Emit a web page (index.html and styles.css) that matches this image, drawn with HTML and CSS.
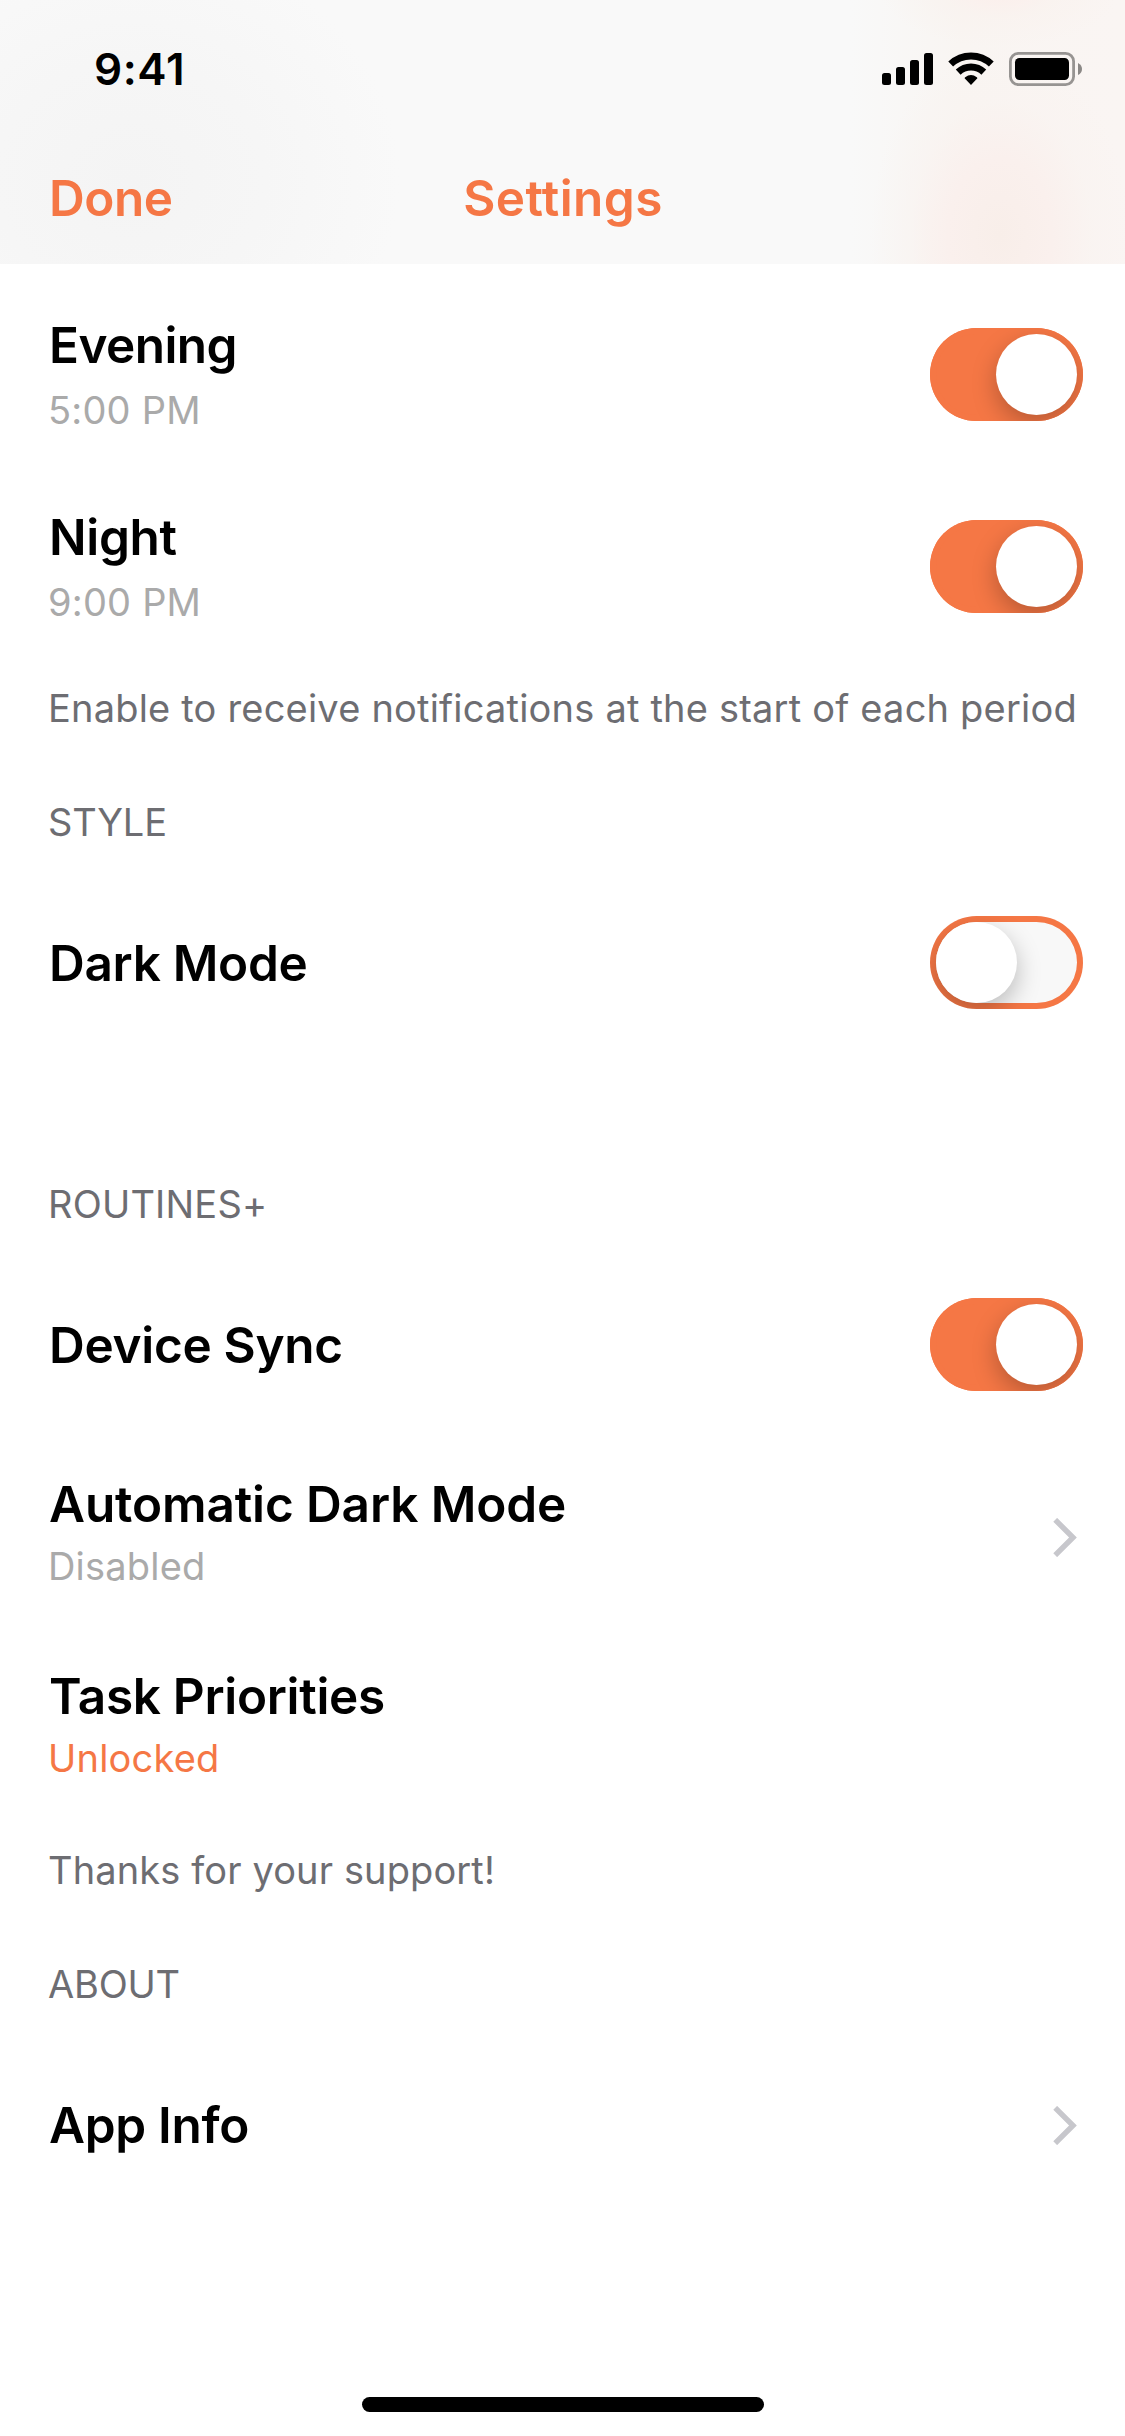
FILE: index.html
```html
<!DOCTYPE html>
<html lang="en">
<head>
<meta charset="utf-8">
<title>Settings</title>
<link rel="stylesheet" href="styles.css">
</head>
<body>
<div class="screen">
  <header class="header">
    <div class="status-bar">
      <span class="time">9:41</span>
      <svg class="status-icons" width="201" height="36" viewBox="0 0 201 36">
        <rect x="0" y="22" width="9" height="12" rx="2.5"/>
        <rect x="14" y="16" width="9" height="18" rx="2.5"/>
        <rect x="28" y="9" width="9" height="25" rx="2.5"/>
        <rect x="42" y="2" width="9" height="32" rx="2.5"/>
        <g fill="none" stroke="#000" stroke-width="7">
          <path d="M68.7 13 A29.5 29.5 0 0 1 109.3 13"/>
          <path d="M76.2 21.1 A18.6 18.6 0 0 1 101.8 21.1"/>
        </g>
        <path d="M89 34 L82.6 27.3 Q82.6 26.6 83.2 26.2 Q89 22 94.8 26.2 Q95.4 26.6 95.4 27.3 Z"/>
        <rect x="128.4" y="2.4" width="63.2" height="31.2" rx="8" fill="none" stroke="#979492" stroke-width="2.8"/>
        <rect x="133" y="7" width="54" height="22" rx="4.5"/>
        <path d="M196 12 Q200 14 200 18 Q200 22 196 24 Z" fill="#8b8886"/>
      </svg>
    </div>
    <nav class="nav-bar">
      <a class="nav-action">Done</a>
      <h1 class="nav-title">Settings</h1>
    </nav>
  </header>

  <main class="settings">
    <section>
      <div class="row">
        <div class="label label-time"><span class="title title-tight">Evening</span><span class="detail">5:00 PM</span></div>
        <span class="toggle toggle-on"><span class="knob"></span></span>
      </div>
      <div class="row">
        <div class="label label-time"><span class="title">Night</span><span class="detail">9:00 PM</span></div>
        <span class="toggle toggle-on"><span class="knob"></span></span>
      </div>
      <p class="footer">Enable to receive notifications at the start of each period</p>
    </section>

    <section>
      <h2 class="heading">STYLE</h2>
      <div class="row">
        <div class="label"><span class="title">Dark Mode</span></div>
        <span class="toggle"><span class="knob"></span></span>
      </div>
    </section>

    <section>
      <h2 class="heading heading-spaced">ROUTINES+</h2>
      <div class="row">
        <div class="label"><span class="title">Device Sync</span></div>
        <span class="toggle toggle-on"><span class="knob"></span></span>
      </div>
      <div class="row">
        <div class="label label-status"><span class="title title-long">Automatic Dark Mode</span><span class="detail">Disabled</span></div>
        <svg class="chevron" width="24" height="39" viewBox="0 0 24 39"><path d="M2.2 1.8 L20 19.5 L2.2 37.2"/></svg>
      </div>
      <div class="row">
        <div class="label label-status"><span class="title">Task Priorities</span><span class="detail detail-accent">Unlocked</span></div>
      </div>
      <p class="footer footer-short">Thanks for your support!</p>
    </section>

    <section>
      <h2 class="heading">ABOUT</h2>
      <div class="row">
        <div class="label"><span class="title">App Info</span></div>
        <svg class="chevron" width="24" height="39" viewBox="0 0 24 39"><path d="M2.2 1.8 L20 19.5 L2.2 37.2"/></svg>
      </div>
    </section>
  </main>

  <div class="home-indicator"></div>
</div>
</body>
</html>
```
FILE: styles.css
```css
* {
  box-sizing: border-box;
  margin: 0;
  padding: 0;
}

body {
  background: #fff;
  color: #000;
  font-family: Inter, "Liberation Sans", sans-serif;
}

.screen {
  display: flex;
  flex-direction: column;
  width: 1125px;
  height: 2436px;
  overflow: hidden;
}

/* Translucent header */
.header {
  height: 264px;
  flex: none;
  background:
    radial-gradient(ellipse 130px 190px at 1000px 235px, #f8eee9 0%, #faf0ed 40%, rgba(249, 243, 240, 0.55) 70%, rgba(249, 245, 243, 0) 100%),
    radial-gradient(ellipse 120px 60px at 1000px -12px, #fceeeb 0%, rgba(249, 242, 238, 0.6) 50%, rgba(249, 245, 243, 0) 100%),
    linear-gradient(90deg, rgba(249, 245, 243, 0) 850px, #f9f5f2 960px, #faf5f3 1125px),
    radial-gradient(ellipse 270px 240px at 130px 180px, #f4f4f4 0%, #f6f6f6 50%, rgba(249, 249, 249, 0) 100%),
    #f9f9f9;
}

.status-bar {
  display: flex;
  justify-content: space-between;
  align-items: flex-start;
  height: 132px;
  padding: 51px 42px 0 94px;
}

.time {
  margin-top: -9px;
  font-size: 44px;
  font-weight: 600;
  line-height: 54px;
  letter-spacing: 0.6px;
}

.nav-bar {
  display: grid;
  grid-template-columns: 1fr auto 1fr;
  padding: 36px 48px 0 49px;
  color: #f57745;
}

.nav-action,
.nav-title {
  font-size: 49.5px;
  font-weight: 600;
  line-height: 60px;
}

.nav-action {
  letter-spacing: -0.5px;
}

.nav-title {
  letter-spacing: 0.4px;
}

/* Settings list */
.settings {
  flex: 1;
  padding: 15px 42px 0 48px;
}

.row {
  display: flex;
  justify-content: space-between;
  align-items: center;
  height: 192px;
}

.label {
  display: flex;
  flex-direction: column;
}

.label-time {
  gap: 11px;
  padding-bottom: 1px;
}

.label-status {
  gap: 8px;
  padding-bottom: 10px;
}

.title {
  margin-left: 1px;
  font-size: 49.5px;
  font-weight: 600;
  line-height: 60px;
  letter-spacing: -0.3px;
}

.title-tight {
  letter-spacing: -0.55px;
}

.title-long {
  letter-spacing: -0.12px;
}

.detail,
.footer,
.heading {
  font-size: 38px;
  font-weight: 400;
  line-height: 48px;
}

.detail {
  color: #aaa;
  letter-spacing: 0.2px;
}

.detail-accent {
  color: #f57745;
}

.footer {
  padding: 21px 0 66px;
  color: #6d6d72;
  letter-spacing: 0.2px;
  white-space: nowrap;
}

.footer-short {
  letter-spacing: 0.12px;
}

.heading {
  padding-bottom: 21px;
  color: #6d6d72;
  letter-spacing: -0.2px;
}

.heading-spaced {
  padding-top: 121px;
  letter-spacing: 0.2px;
}

/* Switches */
.toggle {
  display: flex;
  flex: none;
  width: 153px;
  height: 93px;
  margin-bottom: 1px;
  padding: 6px;
  border-radius: 47px;
  background: #f8f8f8;
  box-shadow: inset 0 0 0 6px #f57745;
  overflow: hidden;
}

.toggle-on {
  justify-content: flex-end;
  background: #f57745;
}

.knob {
  width: 81px;
  height: 81px;
  border-radius: 50%;
  background: #fff;
  box-shadow: 0 9px 24px rgba(0, 0, 0, 0.25);
}

.chevron {
  margin: 1px 6px 0 0;
  fill: none;
  stroke: #c7c7cc;
  stroke-width: 5.4;
}

.home-indicator {
  flex: none;
  align-self: center;
  width: 402px;
  height: 15px;
  margin-bottom: 24px;
  border-radius: 8px;
  background: #000;
}
```
